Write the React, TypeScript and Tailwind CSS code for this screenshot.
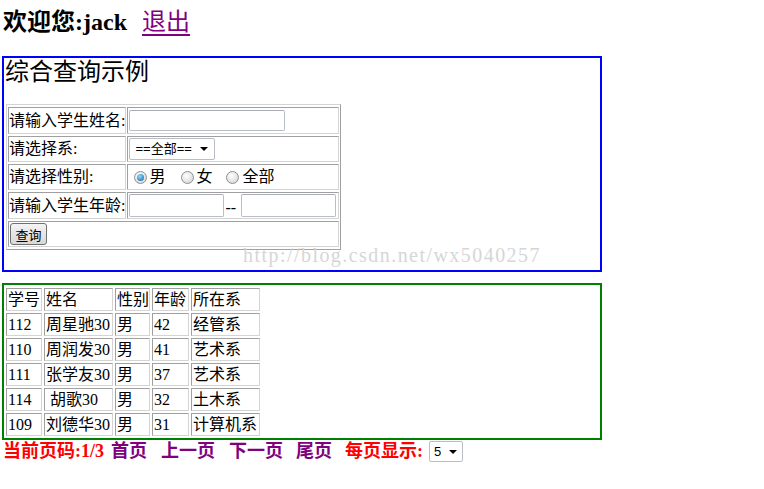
import React from 'react';

const rows = [
  ['112', '周星驰30', '男', '42', '经管系'],
  ['110', '周润发30', '男', '41', '艺术系'],
  ['111', '张学友30', '男', '37', '艺术系'],
  ['114', ' 胡歌30', '男', '32', '土木系'],
  ['109', '刘德华30', '男', '31', '计算机系'],
];

const colW = ['w-[36px]', 'w-[69px]', 'w-[35px]', 'w-[37px]', 'w-[69px]'];

// inset look of an old border=1 table cell
const cell = 'border border-t-[#a0a0a0] border-l-[#a0a0a0] border-r-[#d4d4d4] border-b-[#d4d4d4] p-0 align-middle';

function Radio({ checked }: { checked?: boolean }) {
  return (
    <span className="inline-flex w-[13px] h-[13px] items-center justify-center rounded-full border border-[#8e8f8f] bg-[radial-gradient(circle_at_40%_35%,#ffffff,#cfcfcf)]">
      {checked && (
        <span className="block w-[7px] h-[7px] rounded-full bg-[radial-gradient(circle_at_40%_35%,#8fdcff,#0b5fa8)]" />
      )}
    </span>
  );
}

function TextBox({ w, h }: { w: string; h: string }) {
  return <div className={`${w} ${h} rounded-[2px] border border-[#b9bdc6] border-t-[#a9adb6] bg-white`} />;
}

function Caret() {
  return <span className="block w-0 h-0 border-l-[4px] border-r-[4px] border-t-[4px] border-l-transparent border-r-transparent border-t-black" />;
}

export default function App() {
  return (
    <div className="w-[764px] h-[489px] bg-white text-black font-['Liberation_Serif','Noto_Sans_CJK_SC',serif]">
      <div className="flex items-baseline pl-[3px] pt-[8px] text-[24px] leading-[28px]">
        <span className="font-bold">欢迎您:jack</span>
        <a className="ml-[15px] text-[#800080] underline underline-offset-[4px]">退出</a>
      </div>

      <div className="relative ml-[2px] mt-[20px] w-[600px] h-[216px] border-2 border-[#0000ff]">
        <div className="pl-[1px] text-[24px] leading-[28px]">综合查询示例</div>
        <table className="mt-[18px] ml-[2px] border-separate border-spacing-x-[1px] border-spacing-y-[2px] border border-t-[#d4d4d4] border-l-[#d4d4d4] border-r-[#a0a0a0] border-b-[#a0a0a0] text-[16px]">
          <tbody>
            <tr>
              <td className={`${cell} w-[118px]`}>
                <div className="h-[25px] flex items-center whitespace-nowrap">请输入学生姓名:</div>
              </td>
              <td className={`${cell} w-[212px]`}>
                <div className="h-[25px] flex items-center pl-[1px]">
                  <TextBox w="w-[156px]" h="h-[21px]" />
                </div>
              </td>
            </tr>
            <tr>
              <td className={cell}>
                <div className="h-[24px] flex items-center whitespace-nowrap">请选择系:</div>
              </td>
              <td className={cell}>
                <div className="h-[24px] flex items-center pl-[1px]">
                  <div className="w-[86px] h-[22px] flex items-center justify-between pl-[5px] pr-[6px] rounded-[2px] border border-[#b9bdc6] bg-white font-['Liberation_Sans','Noto_Sans_CJK_SC',sans-serif] text-[13px]">
                    <span>==全部==</span>
                    <Caret />
                  </div>
                </div>
              </td>
            </tr>
            <tr>
              <td className={cell}>
                <div className="h-[24px] flex items-center whitespace-nowrap">请选择性别:</div>
              </td>
              <td className={cell}>
                <div className="h-[24px] flex items-center pl-[6px]">
                  <Radio checked />
                  <span className="ml-[2px]">男</span>
                  <span className="ml-[16px] flex"><Radio /></span>
                  <span className="ml-[2px]">女</span>
                  <span className="ml-[14px] flex"><Radio /></span>
                  <span className="ml-[3px]">全部</span>
                </div>
              </td>
            </tr>
            <tr>
              <td className={cell}>
                <div className="h-[25px] flex items-center whitespace-nowrap">请输入学生年龄:</div>
              </td>
              <td className={cell}>
                <div className="h-[25px] flex items-center pl-[1px]">
                  <TextBox w="w-[95px]" h="h-[23px]" />
                  <span className="ml-[1px] mr-[5px] mt-[4px]">--</span>
                  <TextBox w="w-[95px]" h="h-[23px]" />
                </div>
              </td>
            </tr>
            <tr>
              <td className={cell} colSpan={2}>
                <div className="h-[24px] flex items-center pl-[1px]">
                  <button className="w-[37px] h-[22px] rounded-[3px] border border-[#707070] bg-gradient-to-b from-[#f4f4f4] to-[#d8d8d8] text-[13px] leading-none font-['Noto_Sans_CJK_SC',sans-serif]">
                    查询
                  </button>
                </div>
              </td>
            </tr>
          </tbody>
        </table>
        <span className="absolute left-[239px] top-[187px] whitespace-nowrap text-[20px] leading-[20px] tracking-[1.45px] text-[#d6d6d6]">
          http://blog.csdn.net/wx5040257
        </span>
      </div>

      <div className="ml-[2px] mt-[11px] w-[600px] h-[157px] border-2 border-[#008000] pt-[1px]">
        <table className="border-separate border-spacing-[2px] text-[16px]">
          <tbody>
            <tr>
              {['学号', '姓名', '性别', '年龄', '所在系'].map((h, i) => (
                <td key={h} className={`${cell} ${colW[i]}`}>
                  <div className="h-[21px] leading-[21px] pl-[1px] whitespace-nowrap">{h}</div>
                </td>
              ))}
            </tr>
            {rows.map((r) => (
              <tr key={r[0]}>
                {r.map((v, i) => (
                  <td key={i} className={`${cell} ${colW[i]}`}>
                    <div className="h-[21px] leading-[21px] pl-[1px] whitespace-pre">{v}</div>
                  </td>
                ))}
              </tr>
            ))}
          </tbody>
        </table>
      </div>

      <div className="mt-[1px] pl-[3px] flex items-center h-[21px] text-[18px] leading-[21px] font-bold">
        <span className="text-[#ff0000]">当前页码:1/3</span>
        <a className="ml-[7px] text-[#800080]">首页</a>
        <a className="ml-[14px] text-[#800080]">上一页</a>
        <a className="ml-[14px] text-[#800080]">下一页</a>
        <a className="ml-[13px] text-[#800080]">尾页</a>
        <span className="ml-[13px] text-[#ff0000]">每页显示:</span>
        <div className="ml-[6px] w-[34px] h-[21px] flex items-center justify-between pl-[4px] pr-[5px] rounded-[2px] border border-[#b9bdc6] bg-white font-['Liberation_Sans',sans-serif] font-normal text-[13px]">
          <span>5</span>
          <Caret />
        </div>
      </div>
    </div>
  );
}
